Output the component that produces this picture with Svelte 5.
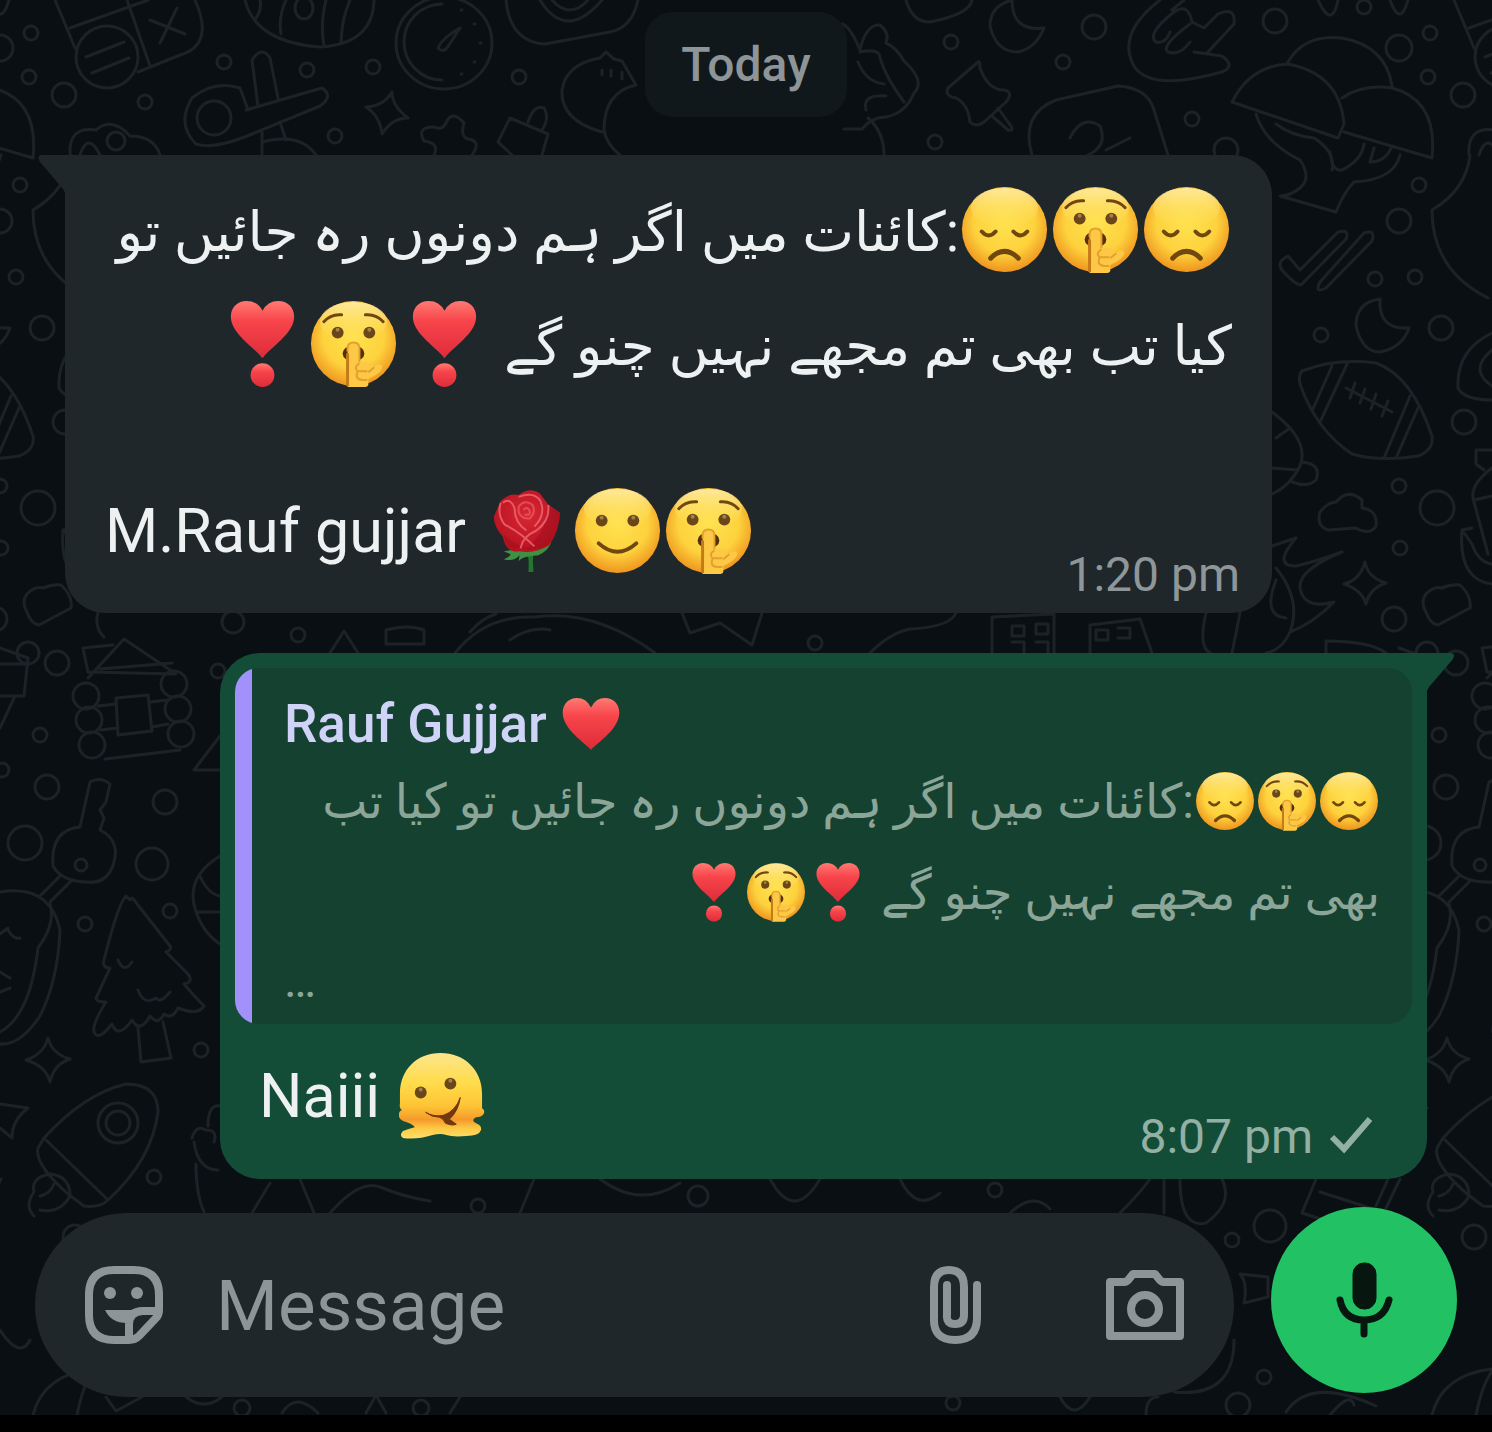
<script>
	let draft = $state('');

	const incoming = [
		{ before: ['sad', 'shush', 'sad'], text: ':کائنات میں اگر ہم دونوں رہ جائیں تو', after: [] },
		{ before: [], text: 'کیا تب بھی تم مجھے نہیں چنو گے ', after: ['heart-mark', 'shush', 'heart-mark'] }
	];

	const quoted = [
		{ before: ['sad', 'shush', 'sad'], text: ':کائنات میں اگر ہم دونوں رہ جائیں تو کیا تب', after: [] },
		{ before: [], text: 'بھی تم مجھے نہیں چنو گے ', after: ['heart-mark', 'shush', 'heart-mark'] }
	];

	// wallpaper bubbles: x, y, radius
	const dots = [
		[31, 33, 7], [29, 77, 7], [64, 95, 12], [0, 48, 13], [145, 102, 7], [224, 62, 7], [307, 70, 7], [373, 67, 7],
		[519, 77, 7], [335, 136, 7], [951, 42, 7], [1094, 27, 12], [1063, 62, 7], [1275, 21, 12], [1364, 7, 7],
		[1192, 119, 7], [1226, 150, 12], [935, 142, 7], [1399, 221, 12], [1375, 279, 7], [1415, 277, 7],
		[1321, 335, 7], [1464, 422, 12], [1399, 486, 7], [1400, 548, 7], [1394, 619, 12],
		[57, 663, 12], [40, 735, 7], [2, 770, 7], [47, 787, 12], [165, 802, 12], [25, 843, 17], [152, 864, 16],
		[85, 924, 7], [170, 911, 7], [201, 1050, 7], [154, 1177, 7], [218, 671, 7], [233, 622, 11],
		[1270, 1226, 16], [1232, 1240, 7], [1474, 1237, 12], [1264, 1377, 7], [1238, 1405, 12], [953, 1403, 7],
		[478, 1206, 7], [242, 1408, 8], [421, 1408, 8], [20, 185, 7], [42, 328, 12], [38, 508, 17], [298, 635, 7],
		[815, 643, 7], [28, 653, 11], [698, 1196, 10], [995, 1190, 7]
	];
</script>

{#snippet emoji(name)}
	<svg class="emoji" viewBox="0 0 92 92" role="img" aria-label={name}><use href="#{name}" /></svg>
{/snippet}

{#snippet urdu(lines)}
	{#each lines as line}
		<p class="urdu" dir="rtl" lang="ur">{#each line.before as name}{@render emoji(name)}{/each}<span>{line.text}</span>{#each line.after as name}{@render emoji(name)}{/each}</p>
	{/each}
{/snippet}

<svg class="defs" width="0" height="0" aria-hidden="true">
	<defs>
		<radialGradient id="skin" cx="0.5" cy="0.42" r="0.6">
			<stop offset="0" stop-color="#ffe250" />
			<stop offset="0.6" stop-color="#fdd23d" />
			<stop offset="1" stop-color="#ee8f1c" />
		</radialGradient>
		<linearGradient id="shine" x1="0" y1="0" x2="0" y2="1">
			<stop offset="0" stop-color="#ffeeae" stop-opacity="0.85" />
			<stop offset="1" stop-color="#ffe25a" stop-opacity="0" />
		</linearGradient>
		<linearGradient id="melt" x1="0" y1="0" x2="0" y2="1">
			<stop offset="0" stop-color="#fde58c" />
			<stop offset="0.35" stop-color="#ffdc4a" />
			<stop offset="0.62" stop-color="#fdc435" />
			<stop offset="0.78" stop-color="#f59a2b" />
			<stop offset="0.88" stop-color="#fdc944" />
			<stop offset="1" stop-color="#ffdf6b" />
		</linearGradient>
		<linearGradient id="red" x1="0" y1="0" x2="0" y2="1">
			<stop offset="0" stop-color="#ff7a72" />
			<stop offset="0.35" stop-color="#f8454b" />
			<stop offset="1" stop-color="#dd2b3a" />
		</linearGradient>
		<radialGradient id="petal" cx="0.5" cy="0.4" r="0.65">
			<stop offset="0" stop-color="#d92733" />
			<stop offset="1" stop-color="#b30f1f" />
		</radialGradient>

		<g id="face">
			<circle cx="46" cy="46" r="43" fill="url(#skin)" />
			<ellipse cx="46" cy="24" rx="34" ry="20" fill="url(#shine)" />
		</g>

		<symbol id="sad" viewBox="0 0 92 92">
			<use href="#face" />
			<g fill="none" stroke="#70480f" stroke-linecap="round">
				<path d="M23 48q7 8 14 0M55 48q7 8 14 0" stroke-width="4" />
				<path d="M32 75q14 -14 28 0" stroke-width="5" />
			</g>
		</symbol>

		<symbol id="shush" viewBox="0 0 92 92">
			<use href="#face" />
			<path d="M16 24q7 -8 18 -7M58 17q11 -1 18 7" fill="none" stroke="#70480f" stroke-width="3" stroke-linecap="round" />
			<circle cx="30" cy="35" r="6" fill="#69471a" />
			<circle cx="62" cy="35" r="6" fill="#69471a" />
			<circle cx="30" cy="32" r="2" fill="#a58148" />
			<circle cx="62" cy="32" r="2" fill="#a58148" />
			<ellipse cx="46" cy="56" rx="11" ry="8" fill="#533011" />
			<path d="M40 90V51q0 -6 6 -6t6 6v15q6 -3 11 0l4 3q6 -4 8 0q0 5 -7 9l-7 4v6q-1 2 -3 2z" fill="#fcc845" />
			<path d="M40 89V56" fill="none" stroke="#c47a18" stroke-width="3" />
			<path d="M40 54V51q0 -6 6 -6t6 6v14M52 66q-6 4 -2 8h10M50 75q-3 7 5 8h5M67 70l-6 5" fill="none" stroke="#e3a02b" stroke-width="2" />
		</symbol>

		<symbol id="smile" viewBox="0 0 92 92">
			<use href="#face" />
			<circle cx="30" cy="36" r="6" fill="#69471a" />
			<circle cx="62" cy="36" r="6" fill="#69471a" />
			<circle cx="30" cy="33" r="2" fill="#a58148" />
			<circle cx="62" cy="33" r="2" fill="#a58148" />
			<path d="M27 59q19 17 38 0" fill="none" stroke="#70480f" stroke-width="4" stroke-linecap="round" />
		</symbol>

		<symbol id="melting" viewBox="0 0 92 92">
			<path d="M46 3C70 3 88 20 88 44V59q3 2 2 5q-2 4 -8 4q-6 3 0 6q6 2 5 7q-2 6 -15 6q-14 1 -20 -1t-14 0q-16 5 -30 3q-4 -3 0 -7q4 -2 12 -4q-2 -3 -8 -5q-9 -2 -8 -8q0 -3 3 -4q-3 -3 -2 -7V44C5 20 22 3 46 3z" fill="url(#melt)" />
			<circle cx="26" cy="43" r="6" fill="#69471a" />
			<circle cx="56" cy="34" r="6" fill="#69471a" />
			<circle cx="26" cy="40" r="2" fill="#a58148" />
			<circle cx="56" cy="31" r="2" fill="#a58148" />
			<path d="M31 63q8 5 18 3q12 -4 17 -18q-2 14 -11 22q4 3 7 5q-4 2 -11 -1q-2 -5 -6 -6q-8 0 -14 -5z" fill="#70380f" stroke="#70380f" stroke-linejoin="round" />
		</symbol>

		<symbol id="heart-mark" viewBox="0 0 92 92">
			<path d="M46 61C38 50 14 36 14 19C14 9 21 3 30 3Q41 3 46 13Q51 3 62 3C71 3 78 9 78 19C78 36 54 50 46 61z" fill="url(#red)" />
			<circle cx="46" cy="78" r="12" fill="url(#red)" />
		</symbol>

		<symbol id="heart" viewBox="0 0 92 92">
			<path d="M46 83C36 72 4 52 4 28C4 14 14 6 25 6Q39 6 46 20Q53 6 67 6C78 6 88 14 88 28C88 52 56 72 46 83z" fill="url(#red)" />
		</symbol>

		<symbol id="rose" viewBox="0 0 92 92">
			<path d="M46 66h7q-1 10 0 22h-5q1 -14 -2 -22z" fill="#23762b" />
			<path d="M23 67q12 -3 25 0q10 -8 23 -9q-3 9 -13 13l-9 1q-8 1 -11 5l1 -6q-6 7 -16 4q6 -2 7 -5z" fill="#3d9140" />
			<path d="M13 32L20 16Q28 8 38 10Q50 1 60 9L68 20L80 28Q79 46 69 61Q54 70 39 67Q25 69 22 52Q13 42 13 32z" fill="url(#petal)" />
			<path d="M40 64Q25 66 23 50Q34 62 50 64zM69 22L80 28Q78 48 68 60Q56 66 46 65Q64 50 69 22z" fill="#9c0d1b" opacity="0.5" />
			<path d="M20 18Q16 30 24 40Q40 48 54 62M68 20Q70 36 56 46Q42 52 40 64M22 18Q30 12 34 24Q34 38 46 46M38 12Q54 6 60 16Q66 30 54 42" fill="none" stroke="#ee6a74" stroke-width="2" opacity="0.8" />
			<path d="M38 22Q44 14 52 20Q56 28 49 34Q40 34 38 27zM43 25q4 -4 6 1t-5 4" fill="none" stroke="#ee6a74" stroke-width="2" opacity="0.6" />
		</symbol>
	</defs>
</svg>

<main class="screen">
	<svg class="wallpaper" viewBox="0 0 1492 1432" preserveAspectRatio="xMidYMid slice" aria-hidden="true">
		<g id="doodles">
			{#each dots as [cx, cy, r]}
				<circle {cx} {cy} {r} />
			{/each}

			<!-- phone, beach ball, timer -->
			<path d="M55 0L75 48M70 28L148 0M127 0L150 66M195 0Q215 45 180 55L138 72M150 20L185 34M177 8L160 43M86 57l38 -15M92 73l37 -15" />
			<circle cx="107" cy="57" r="31" />
			<path d="M245 0Q255 42 320 47Q373 44 374 0M260 0q2 10 -4 18M286 0q-8 18 -5 34M324 46q-4 -22 2 -46M350 0q-8 18 -9 42" />
			<ellipse cx="304" cy="8" rx="9" ry="11" />
			<ellipse cx="444" cy="43" rx="48" ry="46" />
			<path d="M442 4A38 38 0 0 0 442 80M460 28q-18 10 -22 20q6 6 11 -3zM461 10h1M474 24h1M480 43h1M474 62h1M461 74h1" />
			<path d="M506 0Q510 42 545 44L610 32Q632 28 638 0M540 0q26 42 62 0M552 0q18 20 36 0" />
			<!-- scissors, sparkle, cross, tag -->
			<path d="M248 110L240 88Q214 80 192 98Q176 124 196 144Q214 150 252 134L320 106Q334 96 322 88L246 110M258 106L252 60Q262 45 270 58L278 98M262 155V132M280 122L286 140M262 142Q300 132 316 155" />
			<circle cx="214" cy="118" r="17" />
			<path d="M392 92Q392 106 408 118Q392 118 382 134Q380 116 366 107Q384 106 392 92zM434 155q6 -12 -10 -14q-8 -14 10 -14q8 4 12 -4q6 -14 18 0q-4 14 4 16q14 2 4 16M510 118l38 16l-6 21M510 118l-12 24l14 13M528 122q6 -18 16 -14q6 10 -2 22" />
			<path d="M70 155Q68 126 96 130Q112 116 130 136Q154 136 160 155M80 155q8 -24 20 0" />
			<circle cx="116" cy="141" r="9" />
			<path d="M602 132Q560 120 562 90Q566 64 600 58L606 52l8 7l8 2l14 24Q604 92 604 130Q606 144 620 155M602 70v5M611 70v6M622 72v7" />
			<!-- flower, pin, hand, moon -->
			<path d="M842 24q8 2 18 26q6 -26 20 -25q10 8 6 18q10 4 18 18q22 20 10 32q-8 20 -28 24q-14 0 -24 12h-18M860 52q20 -4 20 6q6 20 24 44M858 62q8 20 26 22M866 110q-4 -16 20 -14M868 118q16 14 16 37" />
			<path d="M978 62l-30 26q-4 8 8 10q12 6 14 24q6 6 14 0l22 -20q8 -10 -2 -12q-16 0 -24 -22q0 -8 -2 -6zM992 116l16 14q8 2 0 -8l-10 -14M906 0q6 22 24 22q40 -8 42 -22" />
			<path d="M1012 0Q990 6 990 26Q996 52 1018 52Q1036 48 1044 28Q1012 32 1012 0zM1160 0Q1116 34 1134 66Q1150 92 1222 72Q1236 66 1222 56L1194 52M1208 52L1234 24Q1236 6 1218 14L1204 28L1192 22Q1188 2 1174 12Q1146 34 1156 42Q1166 44 1170 32M1190 24Q1160 46 1168 52Q1180 56 1190 42M1184 0L1172 10" />
			<path d="M1032 155Q1020 114 1056 100L1118 86Q1148 88 1154 110L1168 155M1070 138Q1082 114 1100 126Q1108 146 1088 155M1106 150L1130 138" />
			<!-- mushrooms -->
			<path d="M1232 102Q1250 66 1288 64Q1340 74 1344 124L1338 138zM1288 62Q1304 34 1342 38Q1386 46 1392 86M1342 98Q1362 84 1392 88Q1438 100 1432 158L1344 132M1256 114Q1264 142 1300 160Q1312 178 1300 188Q1290 196 1280 196L1336 212Q1344 192 1354 182Q1394 180 1400 155M1276 124q16 12 38 14q22 14 18 32M1330 152q2 20 12 18q20 -10 22 -26M1374 148l-4 14q16 0 22 -16" />
			<path d="M1318 0q14 30 20 0M1390 0q10 28 18 0M1470 155Q1466 190 1432 210Q1432 270 1488 298" />
			<!-- ticks, moon, football -->
			<path d="M1288 256q-12 6 -6 14q16 18 20 14l44 -45q4 -10 -8 -7l-38 38zM1320 282q-6 12 6 6l46 -47q4 -12 -8 -8z" />
			<path d="M1380 299Q1356 302 1356 326Q1362 352 1380 352Q1402 348 1409 328Q1378 330 1380 299z" />
			<path d="M1302 371Q1336 358 1376 363Q1412 376 1432 436Q1434 450 1418 456Q1380 462 1352 454Q1316 430 1300 384Q1298 376 1302 371zM1332 366L1312 411M1348 362L1320 422M1410 396L1384 458M1418 408L1396 458M1346 388L1392 412M1350 398l5 -15M1360 403l5 -14M1371 409l5 -15M1382 416l6 -15" />
			<path d="M1492 333Q1456 350 1458 388Q1464 400 1492 400M1492 350q-24 20 0 36M1272 412Q1310 440 1300 466Q1290 486 1272 494M1272 468l26 2M1302 462Q1322 464 1316 480Q1308 488 1292 482M1276 438l14 -10" />
			<!-- clouds, flame, sparkle, bottle -->
			<path d="M1328 530Q1316 526 1320 512Q1328 502 1336 502Q1348 488 1362 500V508Q1378 510 1376 526Q1370 536 1356 528zM1365 562Q1368 578 1386 583Q1370 588 1366 604Q1362 590 1344 584Q1360 580 1365 562zM1426 594Q1434 586 1442 588Q1452 584 1460 585Q1472 596 1470 608L1438 625Q1430 624 1426 612Q1420 602 1426 594z" />
			<path d="M1272 546l24 -8q-24 28 0 28q18 -4 46 -14q-44 18 -42 36q4 22 34 14q-22 22 -44 30q12 -32 -14 -64M1276 580q-14 36 10 38M1290 632q-8 18 -24 21M1326 653v-12q44 0 60 12M1476 450h16M1476 450v14l8 6M1492 468q-24 18 -18 34l14 52M1474 500l18 -4M1462 530q-4 50 30 54M1462 530l10 14q6 18 20 20M1472 528l-10 2" />
			<path d="M0 648l28 10l-4 38H0M0 664h28M15 696L0 728M98 613q-4 14 6 24" />
			<!-- log cabin -->
			<path d="M88 678l36 -39l52 35l-88 -2M88 672l-5 -24l30 -3M100 669l72 -6M98 706l18 -2M150 702l18 -2M100 730l18 -2M152 727l16 -3M105 759l75 -9M116 698l32 -3l4 36l-34 4z" />
			<circle cx="86" cy="696" r="13" /><circle cx="89" cy="720" r="13" /><circle cx="92" cy="745" r="13" />
			<circle cx="174" cy="684" r="13" /><circle cx="178" cy="709" r="13" /><circle cx="181" cy="734" r="13" />
			<path d="M220 736l-26 34h26M220 856Q184 878 196 912Q204 934 220 944M200 876q8 18 20 20M196 912h24" />
			<!-- key and tree -->
			<path d="M80 827L90 782Q100 776 110 784L106 802l-6 8l4 8l-4 12Q120 840 114 862Q108 884 88 882Q62 882 53 866Q50 830 80 827zM60 876L40 896M72 880L50 902" />
			<circle cx="81" cy="865" r="6" />
			<path d="M0 892Q50 884 60 930Q58 980 40 1016Q20 1046 0 1044M50 904q6 20 -12 44Q30 1016 0 1032M0 934l8 -6M8 930q6 10 12 8M0 972l10 6M0 992l10 -4" />
			<path d="M126 896Q118 904 104 960q-2 8 6 8l-14 30q0 4 10 4q-14 22 -12 30q4 10 18 -8q6 16 20 -4q8 14 18 -4q8 10 14 -2q8 6 14 -6q20 8 26 -2q-10 -10 -20 -22q10 -2 4 -10l-22 -22q6 -2 4 -6l-36 -46q-2 -4 -4 0zM138 1028l3 34l30 -4l-8 -36M118 960q6 14 14 2M138 990q6 16 18 8q4 6 14 -6" />
			<!-- sparkle, rocket, hand -->
			<path d="M48 1038Q52 1054 70 1059Q54 1064 50 1082Q46 1066 26 1060Q44 1054 48 1038zM0 1104l28 4q-16 12 -16 30l-12 -10M44 1138Q84 1094 126 1084Q158 1084 158 1112Q152 1160 108 1200Q100 1208 84 1206L68 1194Q34 1164 38 1148zM46 1140l62 60M50 1174Q30 1178 34 1192Q24 1206 34 1216M50 1174Q70 1176 70 1196Q60 1214 40 1210M40 1196q10 -2 14 -12" />
			<circle cx="118" cy="1123" r="20" /><circle cx="118" cy="1123" r="12" />
			<path d="M208 1126q0 -22 12 -20M192 1138q4 -14 14 -8q12 0 8 12M194 1142q4 28 24 28M196 1164q0 30 8 48" />
			<!-- between the bubbles -->
			<path d="M455 653q30 -38 80 -36q60 -8 120 36M470 632q12 -14 26 -18M510 640q20 -14 40 -10M682 613l8 20l30 -10l32 22l10 -32M330 653l14 -22l14 22M386 630q22 -6 38 0v14h-38zM870 653q20 -20 40 -24q40 -2 46 -16M992 653v-36l62 -3v39M1012 626h12v10h-12zM1036 624h12v10h-12zM1012 642h12v10M1036 642h12v10M1090 653v-28l50 -6l12 34M1096 630h12v10h-12zM1118 628h12v10h-12M1206 613q-8 34 4 40M1240 613l-8 40" />
			<!-- above and below the composer -->
			<path d="M252 1213l18 -30M300 1179l14 34M330 1213q30 -34 50 -26q24 10 50 14M520 1213l14 -34M600 1179q40 30 80 4M770 1179q24 44 50 0M900 1179q16 34 40 14M1010 1213q24 -22 40 -4M1120 1213q20 -20 30 -34M1164 1179v34M1180 1179q0 50 26 44q28 -20 16 -44M1316 1179l-14 34l44 14M1320 1192l50 16M1376 1206l12 -27M1386 1208l14 -29" />
			<path d="M1240 1274l28 3v20l-24 6q4 -20 -4 -29zM1476 1415q6 -30 16 -44M1432 1415q10 -40 60 -46M1286 1412q24 -36 90 -6M1330 1415q20 -24 24 -10M1174 1392q60 6 60 -52M1146 1415q0 -18 12 -18M1060 1397q14 26 30 0M0 1330q20 30 30 10M106 1397l10 14l26 -14M186 1397q18 14 36 0M282 1413q14 -22 36 0M366 1413l10 -18l10 18M450 1413l10 -16" />
		</g>
		<!-- the tile repeats sideways -->
		<use href="#doodles" x="1399" />
		<use href="#doodles" x="-1399" />
	</svg>

	<div class="thread">
		<div class="date">Today</div>

		<article class="bubble received">
			<svg class="tail" viewBox="0 0 28 42" aria-hidden="true"><path d="M28 0H4Q-2 0 2 7L25 34Q28 38 28 42z" /></svg>
			{@render urdu(incoming)}
			<p class="blank"></p>
			<div class="last-row">
				<p>M.Rauf gujjar {@render emoji('rose')}{@render emoji('smile')}{@render emoji('shush')}</p>
				<time datetime="13:20">1:20 pm</time>
			</div>
		</article>

		<article class="bubble sent">
			<svg class="tail" viewBox="0 0 28 42" aria-hidden="true"><path d="M0 0H24Q30 0 27 6L3 34Q0 38 0 42z" /></svg>
			<blockquote class="quote">
				<p class="author">Rauf Gujjar {@render emoji('heart')}</p>
				{@render urdu(quoted)}
				<p class="more">…</p>
			</blockquote>
			<div class="last-row">
				<p>Naiii {@render emoji('melting')}</p>
				<time datetime="20:07">
					8:07 pm
					<svg class="tick" viewBox="0 0 44 40" role="img" aria-label="Sent"><path d="M3 20L15 32L41 2" /></svg>
				</time>
			</div>
		</article>
	</div>

	<form class="composer" onsubmit={(e) => e.preventDefault()}>
		<div class="field">
			<button type="button" aria-label="Stickers">
				<svg class="icon" viewBox="0 0 80 80" aria-hidden="true">
					<path d="M30 5H50Q75 5 75 30V45Q75 50 72 53L55 71Q51 75 45 75H30Q5 75 5 50V30Q5 5 30 5zM45 74V60Q45 46 59 46H74" />
					<path class="solid" d="M21 45H52Q44 50 43 58Q27 58 21 45z" />
					<circle class="solid" cx="26" cy="28" r="6" />
					<circle class="solid" cx="53" cy="28" r="6" />
				</svg>
			</button>
			<input type="text" placeholder="Message" aria-label="Message" bind:value={draft} />
			<button type="button" class="attach" aria-label="Attach">
				<svg class="icon" viewBox="0 0 80 80" aria-hidden="true">
					<path d="M62 20V53Q62 75 40 75T19 53V22Q19 5 34 5T49 22V50Q49 59 40 59T32 50V20" />
				</svg>
			</button>
			<button type="button" aria-label="Camera">
				<svg class="icon" viewBox="0 0 80 80" aria-hidden="true">
					<path d="M5 17H19Q22 17 24 14L28 9H50L54 14Q56 17 59 17H75V71H5z" />
					<circle cx="40" cy="44" r="14" />
				</svg>
			</button>
		</div>
		<button type="button" class="mic" aria-label="Record voice message">
			<svg viewBox="0 0 60 80" aria-hidden="true">
				<rect x="19" y="3" width="23" height="46" rx="11" />
				<path d="M6 40Q10 60 30 60T55 40M30 60V74" />
			</svg>
		</button>
	</form>
	<div class="nav-bar"></div>
</main>

<style>
	:global(body) {
		margin: 0;
		background: #0a0f13;
	}

	p,
	blockquote {
		margin: 0;
	}

	.defs {
		position: absolute;
	}

	.screen {
		position: relative;
		min-height: 100vh;
		display: flex;
		flex-direction: column;
		overflow: hidden;
		font-family: Roboto, 'DejaVu Sans', sans-serif;
		color: #eef1f2;
	}

	.wallpaper {
		position: absolute;
		inset: 0;
		width: 100%;
		height: 100%;
		fill: none;
		stroke: #1c2327;
		stroke-width: 3;
		stroke-linecap: round;
		stroke-linejoin: round;
	}

	.thread {
		position: relative;
		flex: 1;
		display: flex;
		flex-direction: column;
		padding: 12px 65px 0;
	}

	.date {
		align-self: center;
		padding: 0 36px;
		margin-bottom: 38px;
		border-radius: 28px;
		background: #11181c;
		color: #8d9598;
		font-size: 48px;
		font-weight: 500;
		line-height: 105px;
	}

	.bubble {
		position: relative;
		border-radius: 40px;
		font-size: 61px;
		line-height: 114px;
	}

	.received {
		margin-right: 155px;
		padding: 18px 32px 8px 40px;
		border-top-left-radius: 0;
		background: #1f272a;
	}

	.sent {
		margin-top: 40px;
		margin-left: 155px;
		padding: 15px;
		padding-bottom: 12px;
		border-top-right-radius: 0;
		background: #144d37;
	}

	.tail {
		position: absolute;
		top: 0;
		width: 28px;
		height: 42px;
	}

	.received .tail {
		right: 100%;
		margin-right: -1px;
		fill: #1f272a;
	}

	.sent .tail {
		left: 100%;
		margin-left: -1px;
		fill: #144d37;
	}

	.emoji {
		width: 91px;
		height: 91px;
		vertical-align: -24px;
	}

	.urdu {
		height: 114px;
		padding-right: 8px;
		white-space: nowrap;
	}

	.urdu span {
		font-size: 55px;
	}

	.blank {
		height: 73px;
	}

	.last-row {
		display: flex;
		justify-content: space-between;
		align-items: flex-end;
	}

	.last-row p {
		height: 114px;
		margin-bottom: 17px;
		white-space: nowrap;
	}

	.sent .last-row {
		padding: 0 39px 0 24px;
		margin-top: 15px;
	}

	.sent .last-row p {
		margin-bottom: 14px;
	}

	time {
		display: flex;
		align-items: center;
		gap: 16px;
		font-size: 48px;
		line-height: 60px;
		color: #8f9698;
		white-space: nowrap;
	}

	.sent time {
		color: #92b0a4;
	}

	.tick {
		width: 44px;
		height: 40px;
		fill: none;
		stroke: #92b0a4;
		stroke-width: 6;
	}

	.quote {
		padding: 24px 32px 0 49px;
		border-radius: 24px;
		background: linear-gradient(to right, #a391fb 17px, #154131 17px);
		font-size: 48px;
		line-height: 91px;
		color: #8ba698;
	}

	.quote .emoji {
		width: 62px;
		height: 62px;
		vertical-align: -14px;
	}

	.quote .urdu {
		height: 91px;
		padding-right: 0;
	}

	.quote .urdu span {
		font-size: 48px;
	}

	.author {
		height: 64px;
		font-size: 53px;
		font-weight: 500;
		line-height: 64px;
		color: #cfd3f8;
	}

	.more {
		line-height: 86px;
	}

	.composer {
		position: relative;
		display: flex;
		align-items: center;
		gap: 37px;
		padding: 0 35px 12px;
	}

	.field {
		flex: 1;
		min-width: 0;
		height: 184px;
		display: flex;
		align-items: center;
		padding: 0 49px;
		border-radius: 92px;
		background: #1f272a;
	}

	button {
		display: flex;
		padding: 0;
		border: 0;
		background: none;
	}

	.icon {
		width: 80px;
		height: 80px;
		fill: none;
		stroke: #8d9598;
		stroke-width: 8;
		stroke-linejoin: round;
		stroke-linecap: round;
	}

	.icon .solid {
		fill: #8d9598;
		stroke: none;
	}

	.attach {
		margin-right: 110px;
	}

	input {
		flex: 1;
		min-width: 0;
		padding: 0 52px;
		border: 0;
		outline: 0;
		background: none;
		font: 71px Roboto, sans-serif;
		color: #eef1f2;
	}

	input::placeholder {
		color: #8d9598;
		opacity: 1;
	}

	.mic {
		width: 186px;
		height: 186px;
		margin-bottom: 10px;
		align-items: center;
		justify-content: center;
		border-radius: 50%;
		background: #22c164;
	}

	.mic svg {
		width: 60px;
		height: 80px;
		fill: #07160f;
		stroke: #07160f;
	}

	.mic path {
		fill: none;
		stroke-width: 7;
		stroke-linecap: round;
	}

	.nav-bar {
		position: relative;
		height: 17px;
		background: #000;
	}
</style>
